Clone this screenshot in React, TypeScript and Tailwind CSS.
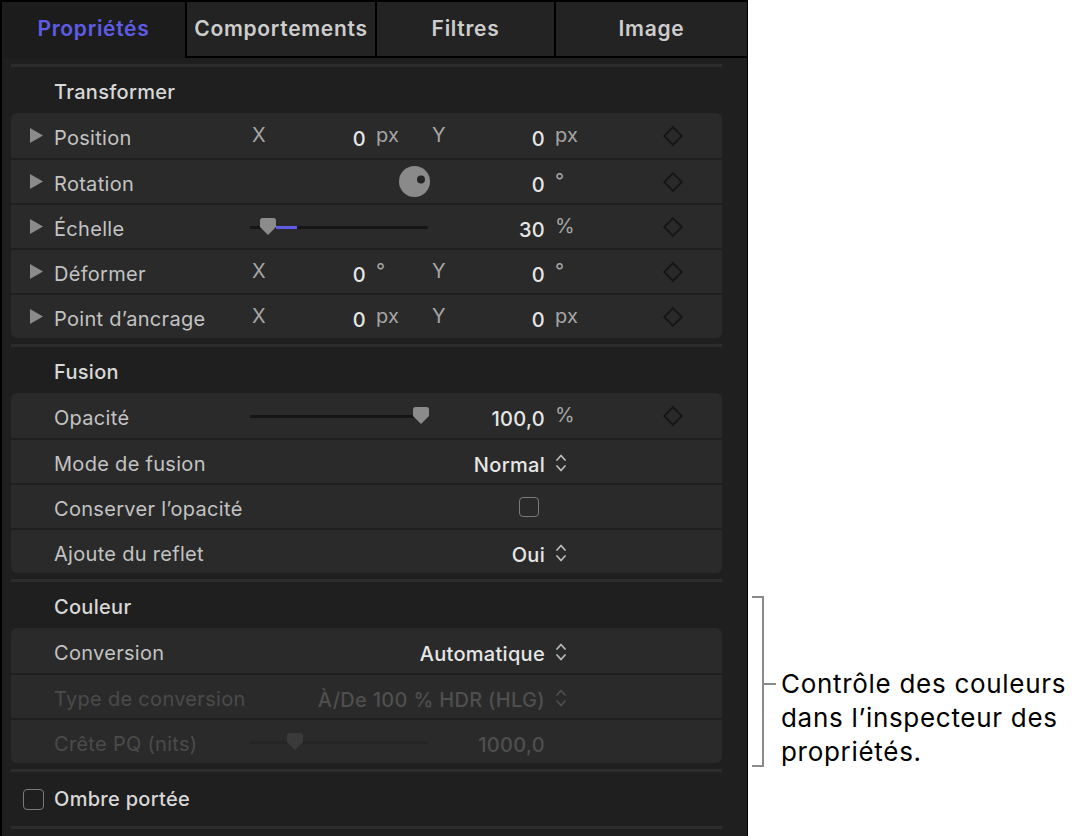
import React from 'react'

const GRID = 'grid grid-cols-[43px_196px_116px_64px_115px_55px_1fr] items-center'

function Triangle() {
  return (
    <svg width="13" height="15" viewBox="0 0 13 15" className="ml-[19px]">
      <polygon points="0,0 13,7.5 0,15" fill="#8b8b8b" />
    </svg>
  )
}

function Diamond() {
  return (
    <svg width="20" height="20" viewBox="0 0 20 20" className="ml-[63px]">
      <rect x="3.75" y="3.75" width="12.5" height="12.5" transform="rotate(45 10 10)" fill="none" stroke="#151515" strokeWidth="1.8" />
    </svg>
  )
}

function Chevrons({ dim = false }: { dim?: boolean }) {
  const c = dim ? '#4f4f4f' : '#bcbcbc'
  return (
    <svg width="12" height="20" viewBox="0 0 12 20" className="ml-[10px] translate-y-[1px]">
      <polyline points="2,7 6,2.5 10,7" fill="none" stroke={c} strokeWidth="1.7" strokeLinecap="round" strokeLinejoin="round" />
      <polyline points="2,13 6,17.5 10,13" fill="none" stroke={c} strokeWidth="1.7" strokeLinecap="round" strokeLinejoin="round" />
    </svg>
  )
}

function Thumb({ color }: { color: string }) {
  return (
    <svg width="16" height="17" viewBox="0 0 16 17">
      <path d="M2.5 0 H13.5 Q16 0 16 2.5 V9 L8 17 L0 9 V2.5 Q0 0 2.5 0 Z" fill={color} />
    </svg>
  )
}

function Slider({ thumbLeft, thumbColor = '#8b8b8b', track = '#151515', fill }: { thumbLeft: number; thumbColor?: string; track?: string; fill?: [number, number] }) {
  return (
    <div className="relative h-[17px] w-[178px]">
      <div className="absolute left-0 right-0 top-[8px] h-[3px] rounded-full" style={{ background: track }} />
      {fill && <div className="absolute top-[8px] h-[3px] bg-[#5e5ce6]" style={{ left: fill[0], width: fill[1] - fill[0] }} />}
      <div className="absolute top-0" style={{ left: thumbLeft }}>
        <Thumb color={thumbColor} />
      </div>
    </div>
  )
}

function Dial() {
  return (
    <svg width="31" height="31" viewBox="0 0 31 31">
      <circle cx="15.5" cy="15.5" r="15.5" fill="#8a8a8a" />
      <circle cx="22" cy="13.5" r="4" fill="#242424" />
    </svg>
  )
}

function Label({ children, dim = false }: { children: React.ReactNode; dim?: boolean }) {
  return <span className={`whitespace-nowrap translate-y-[2px] ${dim ? 'text-[#4b4b4b]' : 'text-[#c3c3c3]'}`}>{children}</span>
}

function Axis({ children }: { children: React.ReactNode }) {
  return <span className="text-[#a6a6a6] -translate-y-[1px]">{children}</span>
}

function Value({ children, dim = false }: { children: React.ReactNode; dim?: boolean }) {
  return <span className={`font-medium whitespace-nowrap translate-y-[3px] ${dim ? 'text-[#4f4f4f]' : 'text-[#e6e6e6]'}`}>{children}</span>
}

function Unit({ children }: { children: React.ReactNode }) {
  return <span className="pl-[10px] text-[#a6a6a6] -translate-y-[1px]">{children}</span>
}

function Field({ axis, value }: { axis?: string; value: React.ReactNode }) {
  if (!axis) return <div className="flex items-center justify-end">{value}</div>
  return (
    <div className="flex items-center justify-between pl-[2px]">
      <Axis>{axis}</Axis>
      {value}
    </div>
  )
}

function Row({ first = false, children }: { first?: boolean; children: React.ReactNode }) {
  return <div className={`${GRID} h-[45px] ${first ? '' : 'border-t-2 border-[#1f1f1f]'}`}>{children}</div>
}

function Card({ children }: { children: React.ReactNode }) {
  return <div className="mx-[11px] w-[711px] rounded-[6px] bg-[#2a2a2a]">{children}</div>
}

function Separator() {
  return <div className="mx-[11px] mt-[6px] h-[3px] w-[711px] bg-[#2c2c2c]" />
}

function Header({ children }: { children: React.ReactNode }) {
  return <div className="flex h-[46px] items-center pl-[54px] pt-[3px] font-medium text-[#d8d8d8]">{children}</div>
}

function Tabs() {
  const tabs = [
    { name: 'Propriétés', w: 'w-[183px]' },
    { name: 'Comportements', w: 'w-[190px]' },
    { name: 'Filtres', w: 'w-[179px]' },
    { name: 'Image', w: 'flex-1' },
  ]
  return (
    <div className="flex h-[58px] border-t-2 border-black text-[21px] font-semibold tracking-[0.7px]">
      {tabs.map((t, i) =>
        i === 0 ? (
          <div key={t.name} className={`${t.w} flex items-center justify-center pb-[2px] bg-[#1c1c1c] text-[#5e5ce6]`}>
            {t.name}
          </div>
        ) : (
          <div key={t.name} className={`${t.w} flex items-center justify-center border-b-2 border-l-2 border-black bg-[#232323] text-[#cdcdcd]`}>
            {t.name}
          </div>
        )
      )}
    </div>
  )
}

function Panel() {
  return (
    <div className="h-[836px] w-[748px] shrink-0 overflow-hidden border-l-2 border-r border-black bg-[#1f1f1f] text-[20px] tracking-[0.3px]">
      <Tabs />
      <div className="-ml-[2px]">
        <Separator />
        <Header>Transformer</Header>
        <Card>
          <Row first>
            <Triangle />
            <Label>Position</Label>
            <Field axis="X" value={<Value>0</Value>} />
            <Unit>px</Unit>
            <Field axis="Y" value={<Value>0</Value>} />
            <Unit>px</Unit>
            <Diamond />
          </Row>
          <Row>
            <Triangle />
            <Label>Rotation</Label>
            <div className="col-span-2 flex justify-end">
              <Dial />
            </div>
            <Field value={<Value>0</Value>} />
            <Unit>°</Unit>
            <Diamond />
          </Row>
          <Row>
            <Triangle />
            <Label>Échelle</Label>
            <div className="col-span-2">
              <Slider thumbLeft={10} fill={[26, 47]} />
            </div>
            <Field value={<Value>30</Value>} />
            <Unit>%</Unit>
            <Diamond />
          </Row>
          <Row>
            <Triangle />
            <Label>Déformer</Label>
            <Field axis="X" value={<Value>0</Value>} />
            <Unit>°</Unit>
            <Field axis="Y" value={<Value>0</Value>} />
            <Unit>°</Unit>
            <Diamond />
          </Row>
          <Row>
            <Triangle />
            <Label>Point d’ancrage</Label>
            <Field axis="X" value={<Value>0</Value>} />
            <Unit>px</Unit>
            <Field axis="Y" value={<Value>0</Value>} />
            <Unit>px</Unit>
            <Diamond />
          </Row>
        </Card>
        <Separator />
        <Header>Fusion</Header>
        <Card>
          <Row first>
            <span />
            <Label>Opacité</Label>
            <div className="col-span-2">
              <Slider thumbLeft={163} />
            </div>
            <Field value={<Value>100,0</Value>} />
            <Unit>%</Unit>
            <Diamond />
          </Row>
          <Row>
            <span />
            <Label>Mode de fusion</Label>
            <span className="col-span-2" />
            <Field value={<Value>Normal</Value>} />
            <Chevrons />
            <span />
          </Row>
          <Row>
            <span />
            <Label>Conserver l’opacité</Label>
            <span className="col-span-2" />
            <div className="flex justify-end pr-[6px]">
              <div className="h-[20px] w-[20px] rounded-[4px] border-[1.5px] border-[#7a7a7a]" />
            </div>
            <span />
            <span />
          </Row>
          <Row>
            <span />
            <Label>Ajoute du reflet</Label>
            <span className="col-span-2" />
            <Field value={<Value>Oui</Value>} />
            <Chevrons />
            <span />
          </Row>
        </Card>
        <Separator />
        <Header>Couleur</Header>
        <Card>
          <Row first>
            <span />
            <Label>Conversion</Label>
            <span className="col-span-2" />
            <Field value={<Value>Automatique</Value>} />
            <Chevrons />
            <span />
          </Row>
          <Row>
            <span />
            <Label dim>Type de conversion</Label>
            <span className="col-span-2" />
            <Field value={<Value dim>À/De 100 % HDR (HLG)</Value>} />
            <Chevrons dim />
            <span />
          </Row>
          <Row>
            <span />
            <Label dim>Crête PQ (nits)</Label>
            <div className="col-span-2">
              <Slider thumbLeft={37} thumbColor="#3a3a3a" track="#252525" />
            </div>
            <Field value={<Value dim>1000,0</Value>} />
            <span />
            <span />
          </Row>
        </Card>
        <Separator />
        <div className="flex h-[54px] items-center pl-[23px]">
          <div className="h-[21px] w-[21px] rounded-[4px] border-[1.5px] border-[#7a7a7a]" />
          <span className="pl-[10px] font-medium text-[#d8d8d8]">Ombre portée</span>
        </div>
        <div className="mx-[11px] h-[3px] w-[711px] bg-[#2c2c2c]" />
      </div>
    </div>
  )
}

function Annotation() {
  return (
    <div className="flex pl-[4px] pt-[596px]">
      <div className="h-[171px] w-[12px] border-y-2 border-r-2 border-[#8a8a8a]" />
      <div className="mt-[71px] flex items-start">
        <div className="mt-[16px] h-[2px] w-[12px] bg-[#8a8a8a]" />
        <p className="whitespace-nowrap pl-[5px] text-[26px] leading-[34px] tracking-[0.7px] text-black">
          Contrôle des couleurs
          <br />
          dans l’inspecteur des
          <br />
          propriétés.
        </p>
      </div>
    </div>
  )
}

export default function App() {
  return (
    <div className="flex h-[836px] w-[1087px] overflow-hidden bg-white font-['Inter','Liberation_Sans',sans-serif]">
      <Panel />
      <Annotation />
    </div>
  )
}
